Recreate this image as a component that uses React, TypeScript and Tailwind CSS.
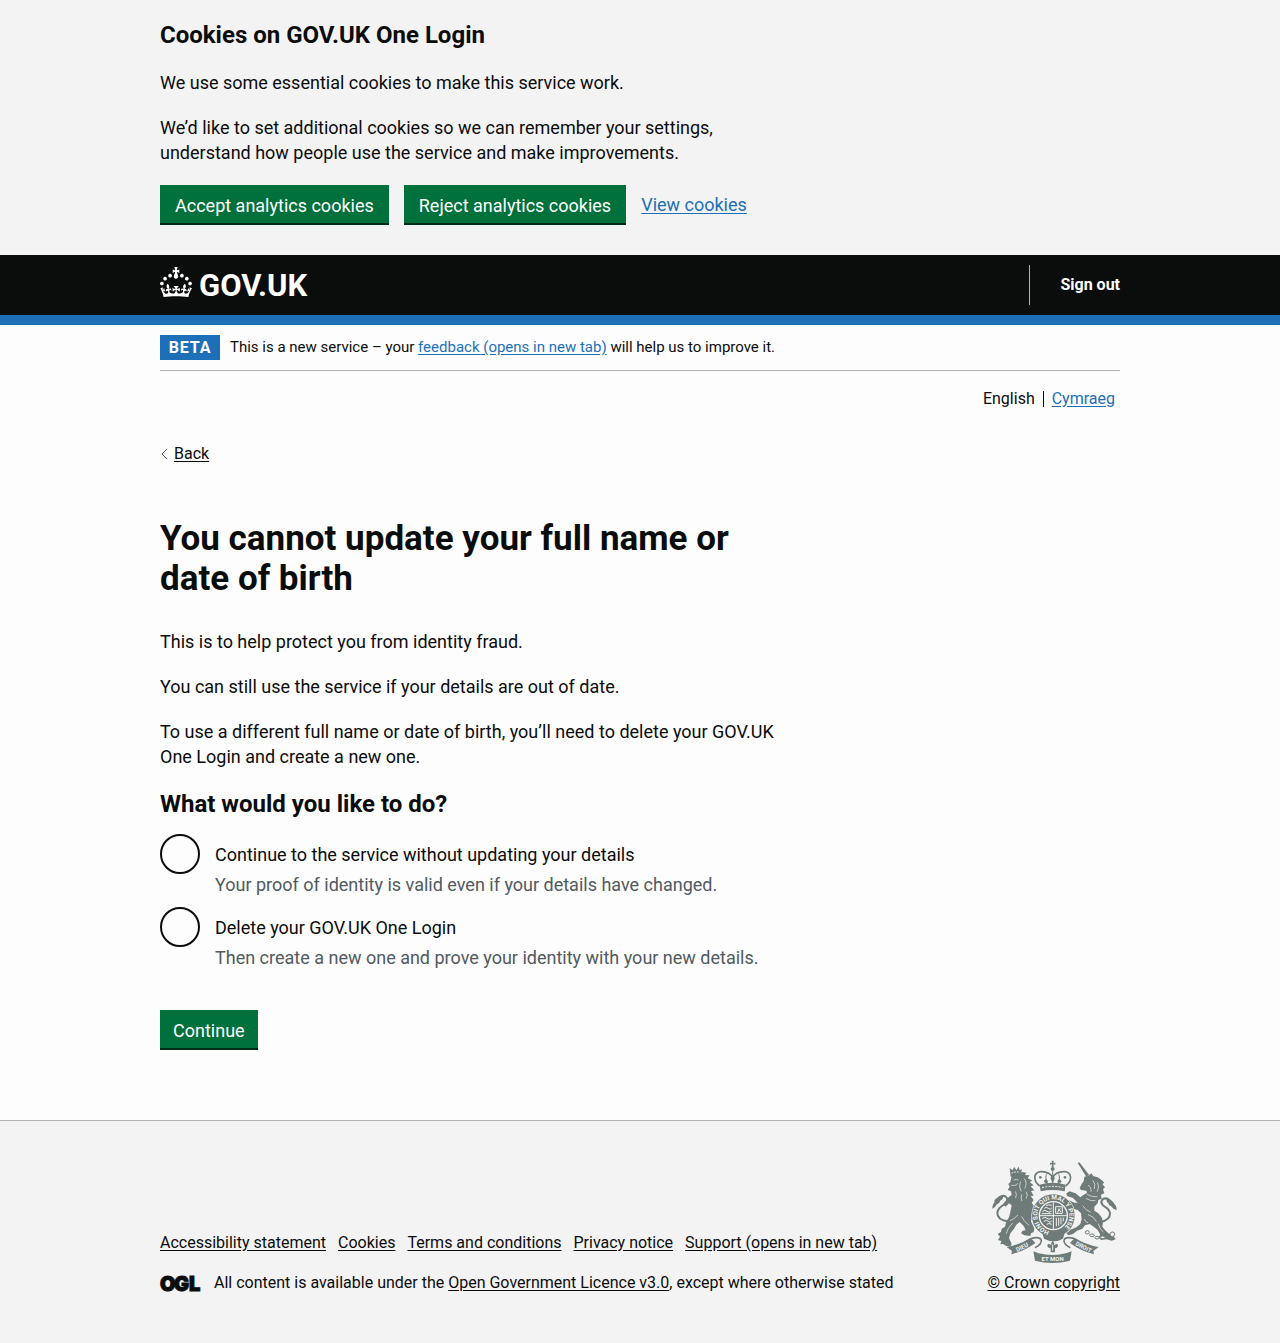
import type { ReactNode } from "react";

const LINK = "text-[#1d70b8] underline underline-offset-2";
const DARK_LINK = "text-[#0b0c0c] underline underline-offset-2";
const BUTTON =
  "h-[38px] bg-[#00703c] pt-0.5 text-lg leading-[25px] text-white shadow-[0_2px_0_#002d18] cursor-pointer";

function Container({ children, className = "" }: { children: ReactNode; className?: string }) {
  return <div className={`mx-auto w-full max-w-[960px] ${className}`}>{children}</div>;
}

function Crown() {
  return (
    <svg viewBox="0 0 32 30" className="h-[30px] w-8 fill-white" aria-hidden="true">
      <path d="M22.6 10.4c-1 .4-2-.1-2.4-1-.4-.9.1-2 1-2.4.9-.4 2 .1 2.4 1s-.1 2-1 2.4m4.9 3c-1 .4-2-.1-2.4-1-.4-.9.1-2 1-2.4.9-.4 2 .1 2.4 1s0 2-1 2.4m3.3 4.8c-1 .4-2-.1-2.4-1-.4-.9.1-2 1-2.4.9-.4 2 .1 2.4 1s-.1 2-1 2.4M17 4.7l2.3 1.2V2.5l-2.3.7-.2-.2.9-3h-3.4l.9 3-.2.2c-.1.1-2.3-.7-2.3-.7v3.4L15 4.7c.1.1.1.2.2.2l-1.3 4c-.1.2-.1.4-.1.6 0 1.1.8 2 1.9 2.2h.7c1-.2 1.9-1.1 1.9-2.1 0-.2 0-.4-.1-.6l-1.3-4c-.1-.2 0-.2.1-.3m-7.6 5.7c.9.4 2-.1 2.4-1 .4-.9-.1-2-1-2.4-.9-.4-2 .1-2.4 1s0 2 1 2.4m-5 3c.9.4 2-.1 2.4-1 .4-.9-.1-2-1-2.4-.9-.4-2 .1-2.4 1s.1 2 1 2.4m-3.2 4.8c.9.4 2-.1 2.4-1 .4-.9-.1-2-1-2.4-.9-.4-2 .1-2.4 1s0 2 1 2.4m14.8 11c4.4 0 8.6.3 12.3.8 1.1-4.5 2.4-7 3.7-8.8l-2.5-.9c.2 1.3.3 1.9 0 2.7-.4-.4-.8-1.1-1.1-2.3l-1.2 4c.7-.5 1.3-.8 2-.9-1.1 2.5-2.6 3.1-3.5 3-1.1-.2-1.7-1.2-1.5-2.1.3-1.2 1.5-1.5 2.1-.1 1.1-2.3-.8-3-2-2.3 1.9-1.9 2.1-3.5.6-5.6-2.1 1.6-2.1 3.2-1.2 5.5-1.2-1.4-3.2-.6-2.5 1.6.9-1.4 2.1-.5 1.9.8-.2 1.1-1.7 2.1-3.5 1.9-2.7-.2-2.9-2.1-2.9-3.6.7-.1 1.9.5 2.9 1.9l.4-4.3c-1.1 1.1-2.1 1.4-3.2 1.4.4-1.2 2.1-3 2.1-3h-5.4s1.7 1.9 2.1 3c-1.1 0-2.1-.2-3.2-1.4l.4 4.3c1-1.4 2.2-2 2.9-1.9-.1 1.5-.2 3.4-2.9 3.6-1.9.2-3.4-.8-3.5-1.9-.2-1.3 1-2.2 1.9-.8.7-2.3-1.2-3-2.5-1.6.9-2.2.9-3.9-1.2-5.5-1.5 2-1.3 3.7.6 5.6-1.2-.7-3.1 0-2 2.3.6-1.4 1.8-1.1 2.1.1.2.9-.3 1.9-1.5 2.1-.9.2-2.4-.5-3.5-3 .6 0 1.2.3 2 .9l-1.2-4c-.3 1.1-.7 1.9-1.1 2.3-.3-.8-.2-1.4 0-2.7l-2.5.9C1.3 23 2.6 25.5 3.7 30c3.7-.5 7.9-.8 12.3-.8" />
    </svg>
  );
}

function OglMark() {
  return (
    <svg
      viewBox="0 0 41 17"
      className="h-[17px] w-[41px] shrink-0 overflow-visible"
      role="img"
      aria-label="Open Government Licence"
    >
      <text
        x="0 14 29"
        y="16"
        fontFamily="Inter, sans-serif"
        fontWeight="900"
        fontSize="20"
        fill="#0b0c0c"
        stroke="#0b0c0c"
        strokeWidth="1"
      >
        OGL
      </text>
    </svg>
  );
}

function RoyalArms() {
  return (
    <svg viewBox="30 33 378 306" className="h-[102px] w-[126px] overflow-visible" fill="#6f7b78" aria-hidden="true">
      {/* Crown over the shield */}
      <path d="M212 32h6l-1 7 6-1v6l-6-1 1 8h-6l1-8-6 1v-6l6 1z" />
      <circle cx="215" cy="57" r="6" />
      <g fill="none" stroke="#6f7b78" strokeWidth="5">
        <path d="M176 108C154 92 158 66 180 65c18-1 31 8 35 19 4-11 17-20 35-19 22 1 26 27 4 43" />
        <path d="M215 64v38M199 70c-7 8-5 22 2 32M231 70c7 8 5 22-2 32" strokeWidth="3" />
      </g>
      <circle cx="178" cy="82" r="4" />
      <circle cx="252" cy="82" r="4" />
      <path d="m208 84 7-7 7 7-7 16zM188 94l7-8 6 8-6 8zM229 94l6-8 7 8-7 8z" />
      <path d="M176 104q39-11 78 0l-3 20q-36-8-72 0z" />
      <path d="M183 113q32-8 64 0" fill="none" stroke="#f3f3f3" strokeWidth="3" strokeDasharray="6 4" />

      {/* Lion */}
      <path d="M86 54l8 7 6-10 6 10 7-11 3 11 7-4-5 20-29 3z" />
      <path d="M92 69q12-5 24-2" fill="none" stroke="#f3f3f3" strokeWidth="3" strokeDasharray="5 3" />
      <path d="M92 78C104 74 114 70 124 66L136 68 132 75 146 76 140 84 154 92 146 96 158 106 149 109 160 121 150 123 158 137 149 138 158 150 152 158 160 170 154 180 154 196 150 214 160 236 158 246 150 250 148 258 130 256 120 250 124 243 134 240 128 228 116 216 106 224 98 238 88 250 84 264 92 282 88 290 76 288 66 282 58 283 61 273 51 270 57 260 50 252 60 246 62 236 72 230 76 214 84 202 88 186 92 166 84 160 74 170 66 162 72 156 80 144 92 134 90 124 80 120 86 110 82 102 88 96z" />
      <path
        d="M99 90q7-5 13 0M92 106q12 3 18-5M118 96q-6 15 2 27M130 86q10 12 2 28M104 125q5 8 0 18M136 126q6 9 0 19M122 134q-4 10 0 18M110 196q-12 12-22 16M122 200q7 16 22 26M94 220q-14 12-18 30"
        fill="none"
        stroke="#f3f3f3"
        strokeWidth="2"
        strokeLinecap="round"
      />
      <path
        d="M78 214q-30-6-29-26 2-14 20-24 14-12 8-21-7-9-18-3-10 7-15 22"
        fill="none"
        stroke="#6f7b78"
        strokeWidth="6"
        strokeLinecap="round"
      />
      <path d="M34 176q0-14 6-18-1-10 8-14 6-8 18-6 2 10-8 14-3 10-12 12-2 8-12 12z" />

      {/* Unicorn */}
      <path d="m290 39 5-2 29 37-8 6z" />
      <path d="M310 80L320 78 332 70 336 78 350 82 362 90 370 98 364 102 372 112 366 118 370 130 360 134 362 146 352 150 350 160 340 170 340 182 352 190 362 202 366 216 364 230 372 240 382 250 396 256 404 268 392 272 376 268 360 270 352 262 358 254 350 240 338 230 326 222 312 226 304 236 288 242 276 252 262 256 256 250 266 240 286 232 298 222 302 208 300 190 290 180 276 176 268 166 256 162 254 154 262 150 280 158 290 158 276 144 258 138 256 130 266 124 284 130 298 142 306 136 318 128 316 122 300 120 296 114 302 102 308 94z" />
      <path
        d="M322 106q10 6 8 18M336 92q10 10 4 24M350 98q7 13-1 26M318 132q12 10 30 8M316 146q12 8 26 6M306 168q8 14 22 18M322 194q17 5 24 20M310 208q2 8 10 10M352 222q4 14 14 24"
        fill="none"
        stroke="#f3f3f3"
        strokeWidth="2"
        strokeLinecap="round"
      />
      <path
        d="M358 216q30-6 29-26-2-12-16-20-14-10-8-20 7-8 18-3 8 5 14 14"
        fill="none"
        stroke="#6f7b78"
        strokeWidth="6"
        strokeLinecap="round"
      />
      <path d="M408 180q-12-2-16-10-8-2-10-10-6-4-6-12 14-2 20 8 10 10 12 24z" />
      <g fill="#f3f3f3" stroke="#6f7b78" strokeWidth="3">
        <ellipse cx="319" cy="247" rx="6" ry="5" />
        <ellipse cx="333" cy="256" rx="7" ry="4" />
        <ellipse cx="348" cy="263" rx="6" ry="4" />
        <ellipse cx="365" cy="262" rx="7" ry="4" />
        <circle cx="394" cy="253" r="7" />
      </g>

      {/* Garter and shield */}
      <circle cx="217" cy="197" r="66" fill="#f3f3f3" />
      <circle cx="217" cy="197" r="54" fill="#f3f3f3" stroke="#6f7b78" strokeWidth="20" />
      <path id="garter" d="M205 243a48 48 0 1 1 24 0" fill="none" />
      <text fontFamily="Roboto, sans-serif" fontWeight="700" fontSize="19" fill="#f3f3f3">
        <textPath href="#garter">HONI SOIT QUI MAL Y PENSE</textPath>
      </text>
      <circle cx="217" cy="197" r="40" />
      <path d="M217 157v80M177 197h80" stroke="#f3f3f3" strokeWidth="3" />
      <g fill="none" stroke="#f3f3f3" strokeWidth="3">
        <path d="M190 175q6-6 12 0t10-1M184 184q8-6 14 0t14-1M196 167q6-5 16-1M182 191h30" />
        <path d="M224 170h20v20h-20zM230 188q2-12 9-12M232 176l8 10" />
        <path d="M184 205q8-6 14 0t14-1M189 214q8-6 13 0t10-1M197 223q6-5 15 0" />
        <path d="M226 203v26M233 203v24M240 203v20M247 203v11" />
      </g>
      <path d="M184 250q33 18 67 0l-5 16q-28 16-57 0z" />

      {/* Motto ribbon */}
      <path d="M77 291q42-8 72-28l14 16q-34 25-72 34l2-10zM353 291q-42-8-72-28l-14 16q34 25 72 34l-2-10z" />
      <path
        d="M151 265q28-6 30 6 1 12-19 22M279 265q-28-6-30 6-1 12 19 22"
        fill="none"
        stroke="#6f7b78"
        strokeWidth="5"
      />
      <path d="M157 304l16 6q41 10 82 0l17-6-5 28q-53 14-105 0z" />
      <g fontFamily="Roboto, sans-serif" fontWeight="700" fontSize="18" fill="#f3f3f3" textAnchor="middle">
        <text transform="translate(126 297) rotate(-27)">DIEU</text>
        <text x="215" y="332">ET MON</text>
        <text transform="translate(305 297) rotate(27)">DROIT</text>
      </g>
      <path d="M215 272q7 7 4 14 10-8 12 0 0 8-9 9v12h-13v-12q-10-1-10-9 2-8 12 0-3-7 4-14z" />
      <path d="M215 284v18" stroke="#f3f3f3" strokeWidth="3" />
    </svg>
  );
}

const options = [
  {
    id: "continue-without-updating",
    label: "Continue to the service without updating your details",
    hint: "Your proof of identity is valid even if your details have changed.",
  },
  {
    id: "delete-login",
    label: "Delete your GOV.UK One Login",
    hint: "Then create a new one and prove your identity with your new details.",
  },
];

const footerLinks = [
  "Accessibility statement",
  "Cookies",
  "Terms and conditions",
  "Privacy notice",
  "Support (opens in new tab)",
];

export default function App() {
  return (
    <div className="min-h-screen bg-[#f3f3f3] px-4 font-[Roboto,sans-serif] text-lg leading-[25px] text-[#0b0c0c]">
      <section aria-label="Cookies on GOV.UK One Login" className="pt-5 pb-[30px]">
        <Container>
          <div className="flex max-w-[630px] flex-col gap-5">
            <h2 className="text-2xl leading-[30px] font-bold">Cookies on GOV.UK One Login</h2>
            <p>We use some essential cookies to make this service work.</p>
            <p className="max-w-[590px]">
              We’d like to set additional cookies so we can remember your settings, understand how people use the
              service and make improvements.
            </p>
            <div className="flex flex-wrap items-center gap-[15px] pb-0.5">
              <button type="button" className={`px-[15px] ${BUTTON}`}>Accept analytics cookies</button>
              <button type="button" className={`px-[15px] ${BUTTON}`}>Reject analytics cookies</button>
              <a href="#cookies" className={LINK}>View cookies</a>
            </div>
          </div>
        </Container>
      </section>

      <header className="-mx-4 border-b-[10px] border-[#1d70b8] bg-[#0b0c0c] px-4 text-white">
        <Container className="flex h-[60px] items-center justify-between">
          <a href="#home" className="flex items-center gap-[7px] pb-1.5" aria-label="GOV.UK">
            <Crown />
            <span className="pt-2 text-[31px] leading-[30px] font-bold">GOV.UK</span>
          </a>
          <nav aria-label="Account" className="flex h-10 items-center border-l border-[#b1b4b6] pl-[30px]">
            <a href="#sign-out" className="text-base font-bold">Sign out</a>
          </nav>
        </Container>
      </header>

      <div className="-mx-4 border-b border-[#b1b4b6] bg-[#fdfdfd] px-4">
        <Container>
          <div className="flex items-center gap-2.5 border-b border-[#b1b4b6] py-2.5">
            <strong className="min-w-[60px] bg-[#1d70b8] px-2 text-center text-base leading-[25px] tracking-wider text-white">
              BETA
            </strong>
            <span className="text-[15px]">
              This is a new service – your <a href="#feedback" className={LINK}>feedback (opens in new tab)</a> will
              help us to improve it.
            </span>
          </div>

          <nav aria-label="Language" className="flex justify-end pt-[15px] pr-[5px] text-base">
            <ul className="flex h-[25px] items-center">
              <li className="border-r border-[#0b0c0c] pr-2 leading-4">English</li>
              <li className="pl-2 leading-4">
                <a href="#cymraeg" lang="cy" className={LINK}>Cymraeg</a>
              </li>
            </ul>
          </nav>

          <a href="#back" className="mt-[30px] inline-flex items-center gap-1.5 text-base leading-[25px]">
            <svg viewBox="0 0 8 12" className="h-3 w-2" fill="none" stroke="#505a5f" aria-hidden="true">
              <path d="M7 1 2 6l5 5" />
            </svg>
            <span className="underline underline-offset-2">Back</span>
          </a>

          <main className="max-w-[640px] pt-[53px] pb-[72px]">
            <h1 className="text-[35px] leading-10 font-bold">You cannot update your full name or date of birth</h1>
            <div className="mt-[30px] flex flex-col gap-5">
              <p>This is to help protect you from identity fraud.</p>
              <p>You can still use the service if your details are out of date.</p>
              <p>
                To use a different full name or date of birth, you’ll need to delete your GOV.UK One Login and create a
                new one.
              </p>
            </div>
            <form onSubmit={(e) => e.preventDefault()}>
              <fieldset className="mt-5">
                <legend className="text-2xl leading-[30px] font-bold">What would you like to do?</legend>
                <div className="mt-[15px] flex flex-col gap-2.5">
                  {options.map((o) => (
                    <div key={o.id} className="flex gap-[15px]">
                      <input
                        type="radio"
                        id={o.id}
                        name="choice"
                        value={o.id}
                        aria-describedby={`${o.id}-hint`}
                        className="size-10 shrink-0 cursor-pointer appearance-none rounded-full border-2 border-[#0b0c0c] checked:bg-[#0b0c0c] checked:shadow-[inset_0_0_0_8px_#fdfdfd]"
                      />
                      <div className="flex flex-col gap-[5px] pt-2">
                        <label htmlFor={o.id}>{o.label}</label>
                        <span id={`${o.id}-hint`} className="text-[#505a5f]">{o.hint}</span>
                      </div>
                    </div>
                  ))}
                </div>
              </fieldset>
              <button type="submit" className={`mt-10 px-[13px] ${BUTTON}`}>Continue</button>
            </form>
          </main>
        </Container>
      </div>

      <footer className="pt-10 pb-[50px] text-base leading-5">
        <Container className="flex flex-wrap items-end justify-between gap-y-6">
          <div className="flex flex-col gap-5">
            <ul className="flex flex-wrap gap-x-3 gap-y-2">
              {footerLinks.map((l) => (
                <li key={l}>
                  <a href="#footer" className={DARK_LINK}>{l}</a>
                </li>
              ))}
            </ul>
            <div className="flex items-center gap-[13px]">
              <OglMark />
              <span>
                All content is available under the{" "}
                <a href="#licence" className={DARK_LINK}>Open Government Licence v3.0</a>, except where otherwise stated
              </span>
            </div>
          </div>
          <a href="#copyright" className={`flex flex-col items-center gap-2.5 ${DARK_LINK}`}>
            <RoyalArms />
            © Crown copyright
          </a>
        </Container>
      </footer>
    </div>
  );
}
